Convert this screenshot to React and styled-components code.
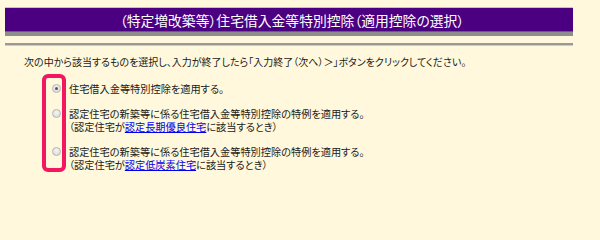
import React from "react";
import styled, { createGlobalStyle } from "styled-components";

const Global = createGlobalStyle`
  html, body { margin: 0; padding: 0; background: #fff8dc; }
  body {
    font-family: "Noto Sans CJK JP", "Noto Sans", sans-serif;
    color: #1a1a1a;
    font-feature-settings: "palt";
  }
`;

const Page = styled.div`
  width: 568px;
  margin-left: 5px;
  padding-top: 7px;
  height: 224px;
`;

const Header = styled.div`
  height: 24px;
  background: #4b0082;
  border-top: 1px solid #c9c0cc;
  border-bottom: 4px solid #8e8e8e;
  box-shadow: inset 0 -1px 0 #6c5a7c;
  display: flex;
  align-items: center;
  justify-content: center;
  color: #ffffff;
  font-size: 13.8px;
  line-height: 24px;
  padding-left: 6px;
`;

const Rule = styled.div`
  margin-top: 7px;
  height: 2px;
  background: #999999;
  border-bottom: 1px solid #cfcac0;
`;

const Instruction = styled.p`
  margin: 9px 0 0 19px;
  font-size: 10px;
  line-height: 13px;
`;

const Options = styled.div`
  position: relative;
  margin: 14px 0 0 47px;
  display: flex;
  flex-direction: column;
  gap: 12px;
`;

const Highlight = styled.div`
  position: absolute;
  left: -10px;
  top: -8px;
  width: 24px;
  height: 98px;
  box-sizing: border-box;
  border: 4px solid #f2175f;
  border-radius: 6px;
  pointer-events: none;
`;

const Option = styled.label`
  display: flex;
  align-items: flex-start;
  gap: 8px;
  font-size: 10.2px;
  line-height: 13px;
`;

const Radio = styled.span`
  flex: none;
  width: 9px;
  height: 9px;
  margin-top: 2px;
  border-radius: 50%;
  box-sizing: border-box;
  border: 1px solid #b4b4b4;
  background: radial-gradient(circle at 50% 35%, #f4f4f4 0%, #d8d8d8 100%);
  display: flex;
  align-items: center;
  justify-content: center;
  &::after {
    content: "";
    width: 3px;
    height: 3px;
    border-radius: 50%;
    background: ${(p) => (p.checked ? "#555" : "transparent")};
  }
`;

const Lines = styled.div`
  display: flex;
  flex-direction: column;
`;

const Line = styled.span`
  display: block;
  height: 13px;
`;

const Link = styled.a`
  color: #0000ee;
  text-decoration: underline;
`;

export default function App() {
  return (
    <>
      <Global />
      <Page>
        <Header>（特定増改築等）住宅借入金等特別控除（適用控除の選択）</Header>
        <Rule />
        <Instruction>
          次の中から該当するものを選択し、入力が終了したら「入力終了（次へ）＞」ボタンをクリックしてください。
        </Instruction>
        <Options>
          <Highlight />
          <Option>
            <Radio checked />
            <Lines>
              <Line>住宅借入金等特別控除を適用する。</Line>
            </Lines>
          </Option>
          <Option>
            <Radio />
            <Lines>
              <Line>認定住宅の新築等に係る住宅借入金等特別控除の特例を適用する。</Line>
              <Line>
                （認定住宅が<Link href="#">認定長期優良住宅</Link>に該当するとき）
              </Line>
            </Lines>
          </Option>
          <Option>
            <Radio />
            <Lines>
              <Line>認定住宅の新築等に係る住宅借入金等特別控除の特例を適用する。</Line>
              <Line>
                （認定住宅が<Link href="#">認定低炭素住宅</Link>に該当するとき）
              </Line>
            </Lines>
          </Option>
        </Options>
      </Page>
    </>
  );
}
